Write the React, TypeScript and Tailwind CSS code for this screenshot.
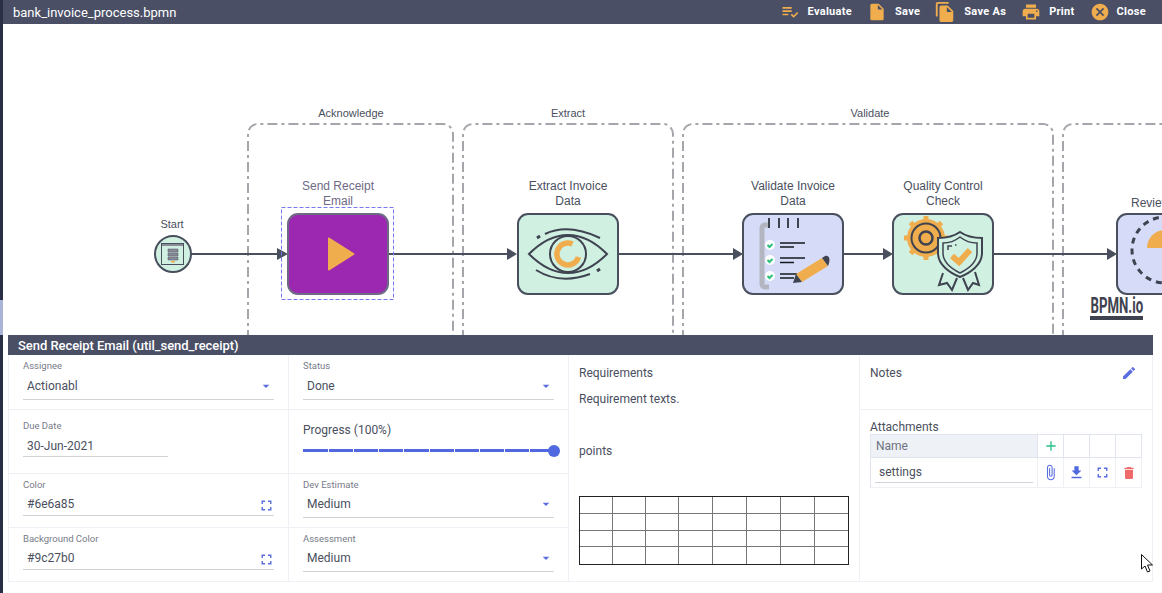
import { MdArrowDropDown, MdAdd, MdAttachFile, MdCancel, MdDelete, MdEdit, MdFileCopy, MdFileDownload, MdFullscreen, MdInsertDriveFile, MdPlaylistAddCheck, MdPrint } from "react-icons/md";

const stroke = "#4a4f5e";
const amber = "#f0ad4e";
const mint = "#d0f0e2";
const dark = "#3f4350";

function HeaderAction({ icon, label, className }: { icon: React.ReactNode; label: string; className: string }) {
  return (
    <div className={`flex items-center ${className}`}>
      {icon}
      <span className="text-[11px] font-bold tracking-[0.3px] text-white">{label}</span>
    </div>
  );
}

function Label({ x, y, children, small, muted, w = 120 }: { x: number; y: number; w?: number; small?: boolean; muted?: boolean; children: React.ReactNode }) {
  return (
    <div
      className={`absolute text-center leading-[15px] font-['Liberation_Sans',sans-serif] ${small ? "text-[11px]" : "text-[12px]"} ${muted ? "text-[#6e6a85]" : "text-[#4a4f5e]"}`}
      style={{ left: x - 3 - w / 2, top: y - 24, width: w }}
    >
      {children}
    </div>
  );
}

function SelectField({ label, value, h }: { label: string; value: string; h: string }) {
  return (
    <div className="flex h-full flex-col px-[14px] pt-[5px]">
      <div className="text-[9.5px] leading-[12px] text-[#777b88]">{label}</div>
      <div className={`mt-[5px] flex items-start justify-between border-b border-[#d2d2d6] pl-1 ${h}`}>
        <span className="text-[12px] leading-[17px] text-[#4a4f5e]">{value}</span>
        <MdArrowDropDown className="text-[#5a6ee0]" size={16} />
      </div>
    </div>
  );
}

function ColorField({ label, value }: { label: string; value: string }) {
  return (
    <div className="flex h-full flex-col px-[14px] pt-[5px]">
      <div className="text-[9.5px] leading-[12px] text-[#777b88]">{label}</div>
      <div className="mt-[5px] flex h-[20px] items-start justify-between border-b border-[#d2d2d6] pl-1">
        <span className="text-[12px] leading-[17px] text-[#4a4f5e]">{value}</span>
        <MdFullscreen className="mt-[1px] -mr-[1px] text-[#5a6ee0]" size={17} />
      </div>
    </div>
  );
}

function Diagram() {
  return (
    <svg className="absolute left-0 top-0" width="1159" height="311" viewBox="3 24 1159 311" fill="none">
      {/* lanes */}
      <g stroke="#a4a6ab" strokeWidth="2" strokeDasharray="10 4 3 4">
        <path d="M248 340V134a10 10 0 0 1 10-10h185a10 10 0 0 1 10 10v206" />
        <path d="M463 340V134a10 10 0 0 1 10-10h190a10 10 0 0 1 10 10v206" />
        <path d="M683 340V134a10 10 0 0 1 10-10h350a10 10 0 0 1 10 10v206" />
        <path d="M1063 340V134a10 10 0 0 1 10-10h100" />
      </g>

      {/* flows */}
      <g stroke={stroke} strokeWidth="2">
        <path d="M191 254H280M389 254H510M619 254H735M844 254H885M994 254H1110" />
      </g>
      <g fill={stroke}>
        <path d="M277 248l11 6-11 6z" />
        <path d="M507 248l10 6-10 6z" />
        <path d="M733 248l10 6-10 6z" />
        <path d="M883 248l10 6-10 6z" />
        <path d="M1107 248l10 6-10 6z" />
      </g>

      {/* start */}
      <circle cx="173" cy="254" r="18" fill={mint} stroke={stroke} strokeWidth="2" />
      <rect x="161.5" y="243.5" width="22" height="21" fill={mint} stroke={stroke} />
      <path d="M162 245h21" stroke="#8a8d98" strokeWidth="2" />
      <path d="M168 249h10v3h-10zM168 253h10v3h-10zM168 257h10v3h-10z" fill="#8a8d98" stroke={stroke} strokeWidth="0.5" />
      <path d="M171 261h4v1.5h-4z" fill={amber} />

      {/* send receipt */}
      <rect x="281.5" y="207.5" width="112" height="92" stroke="#7878f5" strokeDasharray="4 2" />
      <rect x="288" y="214" width="100" height="80" rx="10" fill="#9c27b0" stroke="#6e6a85" strokeWidth="2" />
      <path d="M328 238.5v31a1 1 0 0 0 1.5.8l24.5-15.5a1 1 0 0 0 0-1.6l-24.5-15.5a1 1 0 0 0-1.5.8z" fill={amber} />

      {/* extract */}
      <rect x="518" y="214" width="100" height="80" rx="10" fill={mint} stroke={stroke} strokeWidth="2" />
      <g stroke={dark} strokeWidth="2">
        <path d="M529 254Q548 235 568 235T607 254Q588 273 568 273T529 254z" />
        <circle cx="568" cy="254" r="18" />
        <path d="M545 234Q568 223 600 238" />
        <path d="M536 270Q560 285 590 274" />
        <path d="M537 238l3-2M597 271l3-2" strokeWidth="3" />
      </g>
      <path d="M578.5 257a11 11 0 1 1-6-13" stroke={amber} strokeWidth="5.5" />

      {/* validate */}
      <rect x="743" y="214" width="100" height="80" rx="10" fill="#d6dcf8" stroke={stroke} strokeWidth="2" />
      <path d="M769 225h-4a3 3 0 0 0-3 3v56a3 3 0 0 0 3 3h4" stroke="#b3b6c0" strokeWidth="5" />
      <path d="M769 218v10M779 218v10M788 218v10M798 218v10" stroke={dark} strokeWidth="2" />
      <g fill="#fff">
        <circle cx="770" cy="245" r="5" />
        <circle cx="770" cy="260" r="5" />
        <circle cx="770" cy="276" r="5" />
      </g>
      <path d="M767.5 245l2 2 3-3M767.5 260l2 2 3-3M767.5 276l2 2 3-3" stroke="#2cc07f" strokeWidth="2" />
      <path d="M780 243h25M780 247h14M780 258h25M780 262.5h14M780 274h17M780 278h14" stroke="#16181e" strokeWidth="1.5" />
      <path d="M796 274L822 258L828 266L802 282z" fill={amber} />
      <path d="M822 258l3-2c4-1 6 3 3 10z" fill={dark} />
      <path d="M796 274l6 8-9 1z" fill={dark} />

      {/* quality */}
      <rect x="893" y="214" width="100" height="80" rx="10" fill={mint} stroke={stroke} strokeWidth="2" />
      <circle cx="926" cy="238" r="19" fill={amber} />
      <path d="M926 216v44M904 238h44M910.5 222.5l31 31M941.5 222.5l-31 31" stroke={amber} strokeWidth="5" />
      <circle cx="926" cy="238" r="14.5" stroke={dark} strokeWidth="2" />
      <circle cx="926" cy="238" r="6.5" stroke={dark} strokeWidth="2.5" />
      <path d="M943 273l-4 12 8-2 5 7 5-12M975 272l4 13-6-2-5 7-5-12" fill={mint} stroke={dark} strokeWidth="2" />
      <path d="M960 232C967 237 975 238 982 238V253C982 265 970 273 960 277C950 273 938 265 938 253V238C945 238 953 237 960 232z" fill={mint} stroke={dark} strokeWidth="2" />
      <path d="M960 237C965 241 971 243 977 243V253C977 262 968 269 960 273C952 269 943 262 943 253V243C949 243 955 241 960 237z" stroke={dark} strokeWidth="1.5" />
      <path d="M952 256l7 6 11-12" stroke={amber} strokeWidth="6" />
      <path d="M948 250v-4h4M955 245h1.5" stroke={dark} strokeWidth="1.5" />

      {/* review */}
      <rect x="1117" y="214" width="60" height="80" rx="10" fill="#d6dcf8" stroke={stroke} strokeWidth="2" />
      <circle cx="1165" cy="250" r="33" stroke={dark} strokeWidth="3" strokeDasharray="6 5" />
      <path d="M1147 248a18 18 0 0 1 18-18v18z" fill={amber} />
    </svg>
  );
}

const reqCells = Array.from({ length: 32 }, (_, i) => i);

export default function App() {
  return (
    <div className="relative h-[593px] w-[1162px] overflow-hidden bg-white font-['Roboto',sans-serif]">
      <div className="absolute left-0 top-0 h-full w-[3px] bg-[#2a2f45]" />
      <div className="absolute left-0 top-[300px] h-[35px] w-[3px] bg-[#a9b4d6]" />

      <div className="ml-[3px] flex h-[593px] flex-col">
        <header className="flex h-[24px] shrink-0 items-center bg-[#4a4f66] pl-[10px]">
          <span className="text-[13px] leading-none text-white">bank_invoice_process.bpmn</span>
          <div className="ml-auto flex items-center pr-[16px]">
            <HeaderAction className="mr-[15px] gap-[8px]" label="Evaluate" icon={<MdPlaylistAddCheck size={20} color={amber} />} />
            <HeaderAction className="mr-[14px] gap-[8px]" label="Save" icon={<MdInsertDriveFile size={20} color={amber} />} />
            <HeaderAction className="mr-[15px] gap-[8px]" label="Save As" icon={<MdFileCopy size={22} color={amber} />} />
            <HeaderAction className="mr-[15px] gap-[8px]" label="Print" icon={<MdPrint size={20} color={amber} />} />
            <HeaderAction className="gap-[7px]" label="Close" icon={<MdCancel size={20} color={amber} />} />
          </div>
        </header>

        <div className="relative h-[311px] shrink-0">
          <Diagram />
          <Label small x={351} y={106}>Acknowledge</Label>
          <Label small x={568} y={106}>Extract</Label>
          <Label small x={870} y={106}>Validate</Label>
          <Label small x={172} y={217}>Start</Label>
          <Label muted x={338} y={179}>Send Receipt<br />Email</Label>
          <Label x={568} y={179}>Extract Invoice<br />Data</Label>
          <Label x={793} y={179}>Validate Invoice<br />Data</Label>
          <Label x={943} y={179}>Quality Control<br />Check</Label>
          <div className="absolute left-[1128px] top-[172px] w-[60px] text-[12px] leading-[15px] text-[#4a4f5e] font-['Liberation_Sans',sans-serif]">Review</div>
          <div className="absolute left-[1087px] top-[272px] flex w-[53px] flex-col items-center">
            <span className="origin-center scale-x-[0.6] whitespace-nowrap text-[22px] font-bold leading-[20px] text-[#3f4350]">BPMN.io</span>
            <div className="h-[4px] w-full bg-[#3f4350]" />
          </div>
        </div>

        <section className="relative ml-[5px] w-[1145px]">
          <div className="flex h-[20px] items-center bg-[#4a4f66] pl-[10px] pt-[1px] text-[13px] font-medium tracking-[-0.05px] text-white">
            Send Receipt Email (util_send_receipt)
          </div>
          <div className="grid h-[227px] grid-cols-[280px_280px_291px_292px] grid-rows-[55px_64px_54px_53px] border-b border-r border-l border-[#eef0f5]">
            <div className="border-b border-r border-[#eef0f5]"><SelectField label="Assignee" value="Actionabl" h="h-[23px] pt-[1px]" /></div>
            <div className="border-b border-r border-[#eef0f5]"><SelectField label="Status" value="Done" h="h-[23px] pt-[1px]" /></div>
            <div className="row-span-4 border-r border-[#eef0f5] px-[10px] pt-[10px] text-[12px] text-[#4a4f5e]">
              <div className="leading-[17px]">Requirements</div>
              <div className="mt-[9px] leading-[17px]">Requirement texts.</div>
              <div className="mt-[35px] leading-[17px]">points</div>
              <div className="mt-[36px] grid h-[69px] w-[270px] grid-cols-[33px_33px_33px_34px_34px_34px_34px_33px] grid-rows-4 border border-[#222]">
                {reqCells.map((i) => (
                  <div key={i} className="border-b border-r border-[#777] [&:nth-child(8n)]:border-r-0 [&:nth-last-child(-n+8)]:border-b-0" />
                ))}
              </div>
            </div>
            <div className="flex items-start justify-between border-b border-[#eef0f5] pl-[10px] pr-[15px] pt-[10px] text-[12px] leading-[17px] text-[#4a4f5e]">
              <span>Notes</span>
              <MdEdit size={16} className="text-[#5a6ee0]" />
            </div>

            <div className="border-b border-r border-[#eef0f5]">
              <div className="flex h-full flex-col px-[14px] pt-[10px]">
                <div className="text-[9.5px] leading-[12px] text-[#777b88]">Due Date</div>
                <div className="mt-[5px] h-[20px] w-[145px] border-b border-[#d2d2d6] pl-1 pt-[1px] text-[12px] leading-[17px] text-[#4a4f5e]">30-Jun-2021</div>
              </div>
            </div>
            <div className="border-b border-r border-[#eef0f5] px-[14px] pt-[12px]">
              <div className="text-[12px] leading-[16px] text-[#4a4f5e]">Progress (100%)</div>
              <div className="relative mt-[11px] h-[3px] w-[251px] bg-[#5068e0]">
                {[25, 50, 75, 100, 126, 151, 176, 201, 226].map((x) => (
                  <div key={x} className="absolute top-0 h-[3px] w-[1px] bg-white" style={{ left: x }} />
                ))}
                <div className="absolute right-[-6px] top-[-4px] h-[12px] w-[12px] rounded-full bg-[#5068e0]" />
              </div>
            </div>
            <div className="row-span-3 pl-[10px] pt-[10px]">
              <div className="text-[12px] leading-[14px] text-[#4a4f5e]">Attachments</div>
              <div className="grid w-[272px] grid-cols-[167px_26px_26px_26px_26px] grid-rows-[23px_30px] border-l border-t border-[#e0e4ee]">
                <div className="flex items-center border-b border-r border-[#e0e4ee] bg-[#eef1f6] pl-[5px] text-[12px] text-[#6f7380]">Name</div>
                <div className="flex items-center justify-center border-b border-r border-[#e0e4ee]"><MdAdd size={16} className="text-[#2cc08a]" /></div>
                <div className="border-b border-r border-[#e0e4ee]" />
                <div className="border-b border-r border-[#e0e4ee]" />
                <div className="border-b border-r border-[#e0e4ee]" />
                <div className="border-b border-r border-[#eef0f5] px-[4px]">
                  <div className="h-[25px] border-b border-[#d2d2d6] pl-[4px] text-[12px] leading-[28px] text-[#4a4f5e]">settings</div>
                </div>
                <div className="flex items-center justify-center border-b border-r border-[#eef0f5]"><MdAttachFile size={17} className="text-[#5a6ee0]" /></div>
                <div className="flex items-center justify-center border-b border-r border-[#eef0f5]"><MdFileDownload size={17} className="text-[#5068e0]" /></div>
                <div className="flex items-center justify-center border-b border-r border-[#eef0f5]"><MdFullscreen size={17} className="text-[#5a6ee0]" /></div>
                <div className="flex items-center justify-center border-b border-r border-[#eef0f5]"><MdDelete size={16} className="text-[#ef6a6a]" /></div>
              </div>
            </div>

            <div className="border-b border-r border-[#eef0f5]"><ColorField label="Color" value="#6e6a85" /></div>
            <div className="border-b border-r border-[#eef0f5]"><SelectField label="Dev Estimate" value="Medium" h="h-[22px]" /></div>
            <div className="border-r border-[#eef0f5]"><ColorField label="Background Color" value="#9c27b0" /></div>
            <div className="border-r border-[#eef0f5]"><SelectField label="Assessment" value="Medium" h="h-[22px]" /></div>
          </div>
        </section>
      </div>

      {/* mouse pointer */}
      <svg className="absolute left-[1141px] top-[554px]" width="14" height="20" viewBox="0 0 14 20">
        <path d="M.5.5v14.5l3.5-3 2.5 6 2.5-1-2.5-6h5z" fill="#fff" stroke="#111" />
      </svg>
    </div>
  );
}
